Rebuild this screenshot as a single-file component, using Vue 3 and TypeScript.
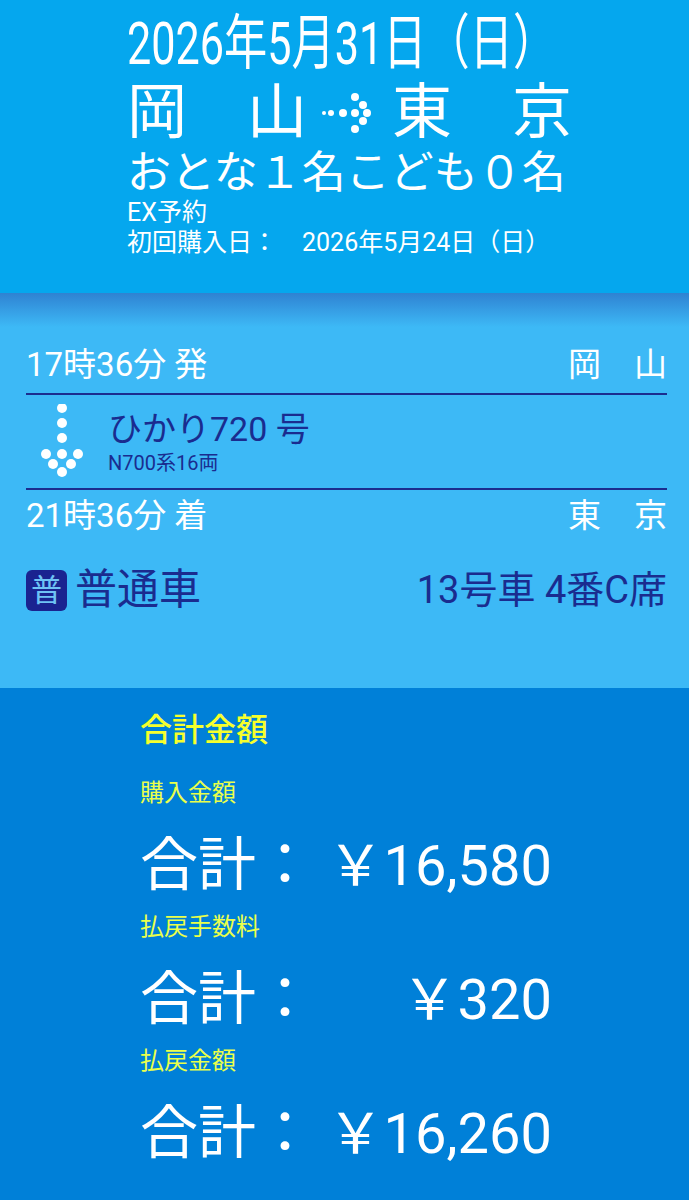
<script setup lang="ts">
const amounts = [
  { label: '購入金額', value: '￥16,580' },
  { label: '払戻手数料', value: '￥320' },
  { label: '払戻金額', value: '￥16,260' },
]
const headDots = [[4,20],[16,20],[28,20],[40,20],[52,20],[40,4],[46,12],[46,28],[40,36],[58,20]]
const downDots = [[25,4],[25,19],[25,34],[25,50],[9,50],[41,50],[16,60],[34,60],[25,68]]
</script>

<template>
  <div class="page">
    <header class="head">
      <div class="date"><span class="date-in">2026年5月31日（日）</span></div>
      <div class="route">
        <span class="st">岡　山</span>
        <svg class="arrow" width="56" height="42" viewBox="0 0 56 42" aria-hidden="true">
          <circle cx="2" cy="21" r="2" fill="#fff" />
          <circle cx="9" cy="21" r="3" fill="#fff" />
          <circle cx="21" cy="21" r="4" fill="#fff" />
          <circle cx="33" cy="21" r="4" fill="#fff" />
          <circle cx="45" cy="21" r="4" fill="#fff" />
          <circle cx="33" cy="5" r="4" fill="#fff" />
          <circle cx="41" cy="13" r="4" fill="#fff" />
          <circle cx="41" cy="29" r="4" fill="#fff" />
          <circle cx="33" cy="37" r="4" fill="#fff" />
        </svg>
        <span class="st">東　京</span>
      </div>
      <div class="pax">おとな１名こども０名</div>
      <div class="small">EX予約</div>
      <div class="small">初回購入日：　2026年5月24日（日）</div>
    </header>

    <section class="trip">
      <div class="row time first"><span>17時36分 発</span><span>岡　山</span></div>
      <div class="train">
        <svg class="down" width="52" height="76" viewBox="0 0 52 76" aria-hidden="true">
          <circle v-for="d in downDots" :key="d.join()" :cx="d[0]" :cy="d[1]" r="5" fill="#fff" />
        </svg>
        <div>
          <div class="tname">ひかり720 号</div>
          <div class="tsub">N700系16両</div>
        </div>
      </div>
      <div class="row time"><span>21時36分 着</span><span>東　京</span></div>
      <div class="seat">
        <div class="cls"><span class="badge">普</span><span>普通車</span></div>
        <div class="no">13号車 4番C席</div>
      </div>
    </section>

    <section class="total">
      <div class="t-title">合計金額</div>
      <template v-for="a in amounts" :key="a.label">
        <div class="t-label">{{ a.label }}</div>
        <div class="t-row"><span class="t-sum">合計：</span><span class="t-val">{{ a.value }}</span></div>
      </template>
    </section>
  </div>
</template>

<style scoped>
.page {
  width: 689px;
  height: 1200px;
  overflow: hidden;
  font-family: Roboto, "Noto Sans CJK JP", sans-serif;
  color: #fff;
  display: flex;
  flex-direction: column;
}
.head {
  height: 293px;
  box-sizing: border-box;
  background: #05a7ee;
  padding: 10px 0 0 127px;
}
.date {
  height: 68px;
  line-height: 68px;
  font-size: 60px;
  white-space: nowrap;
}
.date-in {
  display: inline-block;
  transform: scaleX(0.72);
  transform-origin: left center;
}
.route {
  display: flex;
  align-items: center;
  height: 70px;
  font-size: 60px;
  line-height: 70px;
}
.arrow {
  margin: 0 14px 0 15px;
}
.pax {
  font-size: 44px;
  line-height: 50px;
  white-space: nowrap;
}
.small {
  font-size: 25px;
  line-height: 30px;
  white-space: nowrap;
}
.trip {
  height: 395px;
  box-sizing: border-box;
  padding: 0 22px 0 26px;
  background: linear-gradient(#2f82d2, #3db9f6 34px);
}
.row {
  display: flex;
  justify-content: space-between;
}
.time {
  font-size: 33px;
  line-height: 46px;
  padding-top: 3px;
}
.first {
  padding-top: 49px;
  padding-bottom: 5px;
  border-bottom: 2px solid #1b2d8e;
}
.train {
  display: flex;
  align-items: center;
  gap: 19px;
  height: 95px;
  box-sizing: border-box;
  padding-left: 11px;
  border-bottom: 2px solid #1b2d8e;
  color: #1a2c8f;
}
.tname {
  font-size: 34px;
  line-height: 42px;
}
.tsub {
  font-size: 20px;
  line-height: 26px;
}
.seat {
  display: flex;
  justify-content: space-between;
  align-items: center;
  margin-top: 26px;
  color: #1a2c8f;
}
.cls {
  display: flex;
  align-items: center;
  gap: 8px;
  font-size: 42px;
  line-height: 50px;
}
.badge {
  width: 41px;
  height: 41px;
  border-radius: 6px;
  background: #1a2390;
  color: #6fc3f5;
  font-size: 31px;
  line-height: 41px;
  text-align: center;
}
.no {
  font-size: 38px;
  line-height: 50px;
}
.total {
  flex: 1;
  background: #0080d8;
  padding: 20px 0 0 140px;
}
.t-title {
  font-size: 32px;
  line-height: 44px;
  font-weight: 500;
  color: #f6ff2c;
  margin-bottom: 26px;
}
.t-label {
  font-size: 24px;
  line-height: 30px;
  color: #eaff4a;
}
.t-row {
  width: 412px;
  display: flex;
  justify-content: space-between;
  align-items: center;
  height: 104px;
}
.t-sum {
  font-size: 58px;
}
.t-val {
  font-size: 56px;
}
</style>
